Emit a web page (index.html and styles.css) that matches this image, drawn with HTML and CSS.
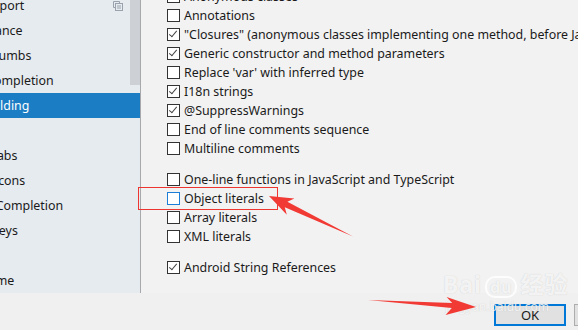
FILE: index.html
```html
<!doctype html>
<html lang="en">

<head>
    <meta charset="utf-8">
    <title>Settings - Code Folding</title>
    <link rel="stylesheet" href="styles.css">
</head>

<body>
    <div class="window">
        <div class="main">
            <aside class="tree">
                <ul class="tree-list">
                    <li class="node"><span class="name">Auto Import</span>
                        <svg class="copy-icon" width="10" height="10" viewBox="0 0 10 10">
                            <path d="M0.5 0.5h6v1.5M0.5 0.5v6h1.5" fill="none" stroke="#9aa3ad" />
                            <rect x="2.5" y="2.5" width="7" height="7" fill="none" stroke="#9aa3ad" />
                            <path d="M4 5h4M4 7h4" stroke="#9aa3ad" />
                        </svg>
                    </li>
                    <li class="node"><span class="name">Appearance</span></li>
                    <li class="node"><span class="name">Breadcrumbs</span></li>
                    <li class="node"><span class="name">Code Completion</span></li>
                    <li class="node selected"><span class="name">Code Folding</span></li>
                    <li class="node"><span class="name">Console</span></li>
                    <li class="node"><span class="name">Editor Tabs</span></li>
                    <li class="node"><span class="name">Gutter Icons</span></li>
                    <li class="node"><span class="name">Postfix Completion</span></li>
                    <li class="node"><span class="name">Smart Keys</span></li>
                    <li class="node top-level"><span class="name">Font</span></li>
                    <li class="node top-level"><span class="name">Color Scheme</span></li>
                </ul>
                <div class="scrollbar"></div>
            </aside>

            <section class="options">
                <label class="option"><span class="box"></span>Anonymous classes</label>
                <label class="option"><span class="box"></span>Annotations</label>
                <label class="option"><span class="box checked"></span>"Closures" (anonymous classes implementing one method, before Java 8)</label>
                <label class="option"><span class="box checked"></span>Generic constructor and method parameters</label>
                <label class="option"><span class="box"></span>Replace 'var' with inferred type</label>
                <label class="option"><span class="box checked"></span>I18n strings</label>
                <label class="option"><span class="box checked"></span>@SuppressWarnings</label>
                <label class="option"><span class="box"></span>End of line comments sequence</label>
                <label class="option"><span class="box"></span>Multiline comments</label>

                <div class="spacer"></div>
                <label class="option"><span class="box"></span>One-line functions in JavaScript and TypeScript</label>
                <label class="option"><span class="box focused"></span>Object literals</label>
                <label class="option"><span class="box"></span>Array literals</label>
                <label class="option"><span class="box"></span>XML literals</label>

                <div class="spacer"></div>
                <label class="option"><span class="box checked"></span>Android String References</label>
            </section>
        </div>

        <footer class="buttons">
            <button type="button" class="btn default">OK</button>
            <button type="button" class="btn">Cancel</button>
            <button type="button" class="btn">Apply</button>
        </footer>

        <div class="watermark">
            <div class="wm-logo">Bai<span class="paw">du</span>经验</div>
            <div class="wm-url">jingyan.baidu.com</div>
        </div>

        <!-- annotation marks drawn over the screenshot -->
        <svg class="marks" width="578" height="330" viewBox="0 0 578 330">
            <rect x="138.5" y="187.5" width="139" height="22" fill="none" stroke="#ee3530" stroke-width="1" />
            <polygon points="269,196 294.4,198.5 287.4,201.8 353,236.5 284.8,207.2 286.8,214.8" fill="#f23a35" />
            <polygon points="476,307 446.6,297 452.2,302.9 368,300 451.8,307.9 445.6,315" fill="#f23a35" />
        </svg>
    </div>
</body>

</html>
```

FILE: styles.css
```css
html, body {
    margin: 0;
    padding: 0;
    width: 578px;
    height: 330px;
    overflow: hidden;
    background: #f0f0f0;
    font-family: 'Noto Sans', 'Noto Sans CJK SC', sans-serif;
    font-size: 12.4px;
    color: #1a1a1a;
}

.window {
    position: relative;
    width: 740px;
    height: 330px;
    display: flex;
    flex-direction: column;
}

.main {
    display: flex;
    height: 293px;
}

/* left settings tree, clipped on its left side */
.tree {
    position: relative;
    width: 140px;
    flex-shrink: 0;
    background: #e6ebf0;
    border-right: 1px solid #a7a9ac;
    overflow: hidden;
}

.tree-list {
    list-style: none;
    margin: -7px 0 0 0;
    padding: 0;
}

.node {
    display: flex;
    align-items: center;
    height: 25px;
    white-space: nowrap;
}

.node .name { margin-left: -47px; }
.node.top-level .name { margin-left: -66px; }

.node.selected {
    background: #1b7dc3;
    color: #ffffff;
}

.copy-icon {
    margin-left: auto;
    margin-right: 17px;
}

.scrollbar {
    position: absolute;
    top: 0;
    right: 0;
    width: 10px;
    height: 85px;
    background: #cdd0d5;
}

/* right options panel */
.options {
    flex: 1;
    background: #f2f2f2;
    padding-left: 26px;
    margin-top: -13px;
    white-space: nowrap;
}

.option {
    display: flex;
    align-items: center;
    height: 19px;
    gap: 4px;
}

.spacer { height: 12px; }

.box {
    width: 13px;
    height: 13px;
    box-sizing: border-box;
    border: 1px solid #333333;
    background: #ffffff;
    flex-shrink: 0;
    position: relative;
}

.box.focused { border-color: #1c7ed6; }

.box.checked::after {
    content: '';
    position: absolute;
    left: 3px;
    top: 0px;
    width: 3px;
    height: 7px;
    border-right: 1px solid #444444;
    border-bottom: 1px solid #444444;
    transform: rotate(40deg);
}

/* bottom button bar */
.buttons {
    display: flex;
    justify-content: flex-end;
    gap: 8px;
    padding: 11px 14px 0 0;
}

.btn {
    width: 72px;
    height: 22px;
    box-sizing: border-box;
    background: #e1e1e1;
    border: 1px solid #adadad;
    font-family: inherit;
    font-size: 13px;
    color: #1a1a1a;
    padding: 0;
}

.btn.default { border: 2px solid #0078d7; }

/* faint site watermark */
.watermark {
    position: absolute;
    left: 443px;
    top: 273px;
    color: rgba(255, 255, 255, 0.8);
    text-shadow: 0 0 1px rgba(160, 160, 160, 0.5);
    line-height: 1;
}

.wm-logo {
    font-size: 23px;
    font-weight: 700;
    letter-spacing: 1px;
}

.paw {
    display: inline-block;
    font-size: 16px;
    padding: 1px 3px;
    margin: 0 3px;
    border: 2px solid rgba(255, 255, 255, 0.8);
    border-radius: 10px;
}

.wm-url {
    font-size: 12px;
    margin-top: 3px;
    margin-left: 2px;
}

.marks {
    position: absolute;
    top: 0;
    left: 0;
    pointer-events: none;
}
```
